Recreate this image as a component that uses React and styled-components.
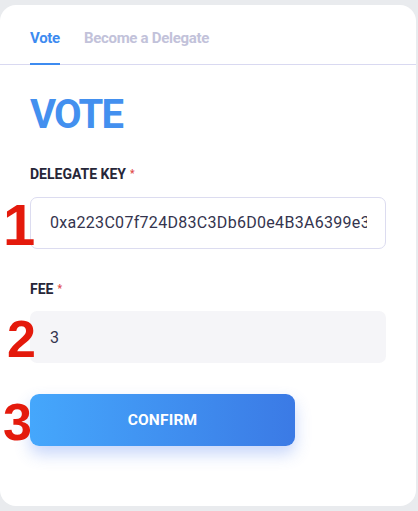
import styled, { createGlobalStyle } from "styled-components";

const GlobalStyle = createGlobalStyle`
  html, body {
    margin: 0;
    padding: 0;
    background: #e9ebee;
    font-family: Roboto, "Noto Sans", sans-serif;
  }
`;

const Page = styled.div`
  position: relative;
  width: 418px;
  height: 511px;
  overflow: hidden;
  padding-top: 5px;
  box-sizing: border-box;
`;

const Card = styled.div`
  width: 416px;
  height: 501px;
  background: #fff;
  border-radius: 16px;
  box-sizing: border-box;
`;

const Tabs = styled.div`
  display: flex;
  gap: 24px;
  padding: 0 30px;
  border-bottom: 1px solid #d9d9f1;
  height: 59px;
  align-items: flex-end;
`;

const Tab = styled.div`
  font-size: 15px;
  font-weight: 700;
  color: ${(p) => (p.$active ? "#3d8bf0" : "#c2c2da")};
  padding-bottom: 16px;
  border-bottom: 2px solid ${(p) => (p.$active ? "#3d8bf0" : "transparent")};
  margin-bottom: -1px;
  letter-spacing: -0.3px;
`;

const Body = styled.div`
  padding: 30px 30px 0 30px;
`;

const Title = styled.h1`
  margin: 0;
  font-size: 40px;
  line-height: 40px;
  font-weight: 700;
  color: #4390ef;
  letter-spacing: -1.8px;
`;

const Field = styled.div`
  display: flex;
  flex-direction: column;
  margin-top: ${(p) => p.$top}px;
`;

const Label = styled.label`
  font-size: 14px;
  font-weight: 700;
  color: #262638;
  line-height: 16px;
  margin-bottom: 14.5px;
`;

const Star = styled.span`
  color: #e04848;
  font-size: 10px;
  vertical-align: top;
  margin-left: 4px;
`;

const Input = styled.div`
  width: 356px;
  height: 52px;
  box-sizing: border-box;
  border-radius: 7px;
  border: ${(p) => (p.$filled ? "none" : "1px solid #dcdcf0")};
  background: ${(p) => (p.$filled ? "#f5f5f8" : "#fff")};
  padding: 0 18px 0 ${(p) => (p.$filled ? 20 : 19)}px;
  display: flex;
  align-items: center;
  font-size: 16px;
  color: #34344e;
`;

const Value = styled.span`
  flex: 1;
  min-width: 0;
  overflow: hidden;
  white-space: nowrap;
  letter-spacing: 0.3px;
`;

const Button = styled.button`
  margin-top: 31px;
  width: 265px;
  height: 52px;
  border: none;
  border-radius: 9px;
  background: linear-gradient(90deg, #45a7fc 0%, #3b7ae5 100%);
  box-shadow: 0 8px 16px rgba(70, 120, 240, 0.3);
  color: #fff;
  font-family: inherit;
  font-size: 15.5px;
  font-weight: 700;
  letter-spacing: 0.2px;
`;

const Marker = styled.div`
  position: absolute;
  left: ${(p) => p.$x}px;
  top: ${(p) => p.$y}px;
  font-family: "Liberation Sans", Arial, sans-serif;
  font-weight: 700;
  font-size: ${(p) => p.$size || 52}px;
  line-height: 1;
  color: #e41a0c;
`;

export default function App() {
  return (
    <>
      <GlobalStyle />
      <Page>
        <Card>
          <Tabs>
            <Tab $active>Vote</Tab>
            <Tab>Become a Delegate</Tab>
          </Tabs>
          <Body>
            <Title>VOTE</Title>
            <Field $top={31}>
              <Label>
                DELEGATE KEY<Star>*</Star>
              </Label>
              <Input>
                <Value>0xa223C07f724D83C3Db6D0e4B3A6399e3</Value>
              </Input>
            </Field>
            <Field $top={32}>
              <Label>
                FEE<Star>*</Star>
              </Label>
              <Input $filled>
                <Value>3</Value>
              </Input>
            </Field>
            <Button>CONFIRM</Button>
          </Body>
        </Card>
        <Marker $x={3} $y={196} $size={58}>1</Marker>
        <Marker $x={7} $y={313}>2</Marker>
        <Marker $x={3} $y={396}>3</Marker>
      </Page>
    </>
  );
}
